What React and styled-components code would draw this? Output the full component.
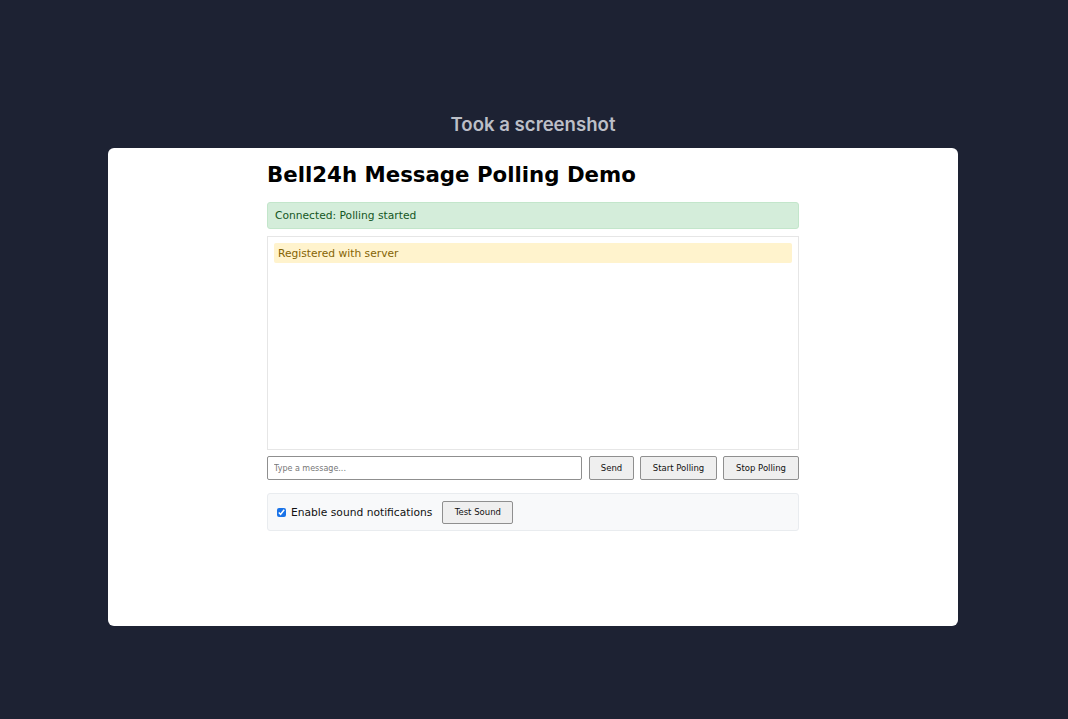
import React, { useState } from 'react';
import styled, { createGlobalStyle } from 'styled-components';

const GlobalStyle = createGlobalStyle`
  html, body {
    margin: 0;
    padding: 0;
    background: #1d2233;
  }
  body {
    font-family: "DejaVu Sans", "Liberation Sans", sans-serif;
  }
`;

const Page = styled.div`
  min-height: 719px;
  display: flex;
  flex-direction: column;
  align-items: center;
  padding: 111px 2px 0 0;
  box-sizing: border-box;
`;

const Caption = styled.div`
  font-family: Inter, "Noto Sans", sans-serif;
  font-weight: 600;
  font-size: 18.6px;
  line-height: 26px;
  color: #bcbfc7;
  margin-bottom: 11px;
`;

const Card = styled.div`
  width: 850px;
  height: 478px;
  background: #fff;
  border-radius: 6px;
  box-sizing: border-box;
  padding-top: 13px;
`;

const Content = styled.div`
  width: 532px;
  margin: 0 auto;
`;

const Heading = styled.h1`
  margin: 0 0 13px;
  font-size: 21.3px;
  line-height: 28px;
  font-weight: bold;
  color: #000;
`;

const Status = styled.div`
  height: 27px;
  box-sizing: border-box;
  padding: 0 7px;
  display: flex;
  align-items: center;
  font-size: 10.7px;
  color: #155724;
  background: #d4edda;
  border: 1px solid #c3e6cb;
  border-radius: 3px;
`;

const Messages = styled.div`
  margin-top: 7px;
  height: 214px;
  box-sizing: border-box;
  border: 1px solid #e6e6e6;
  padding: 6px;
`;

const Message = styled.div`
  height: 20px;
  display: flex;
  align-items: center;
  padding: 0 4px;
  font-size: 10.7px;
  color: #856404;
  background: #fff3cd;
  border-radius: 2px;
`;

const InputRow = styled.div`
  margin-top: 6px;
  display: flex;
  gap: 6px;
  height: 24px;
`;

const TextInput = styled.input`
  flex: 1;
  min-width: 0;
  box-sizing: border-box;
  height: 24px;
  border: 1px solid #8f8f8f;
  border-radius: 2px;
  padding: 0 6px;
  font-family: "DejaVu Sans", sans-serif;
  font-size: 8px;
  margin-right: 1px;
  &::placeholder {
    color: #777;
  }
`;

const Button = styled.button`
  box-sizing: border-box;
  width: ${(p) => p.w}px;
  height: ${(p) => p.h || 24}px;
  padding: 0;
  font-family: "DejaVu Sans", sans-serif;
  font-size: 8.5px;
  color: #111;
  background: #efefef;
  border: 1px solid #8f8f8f;
  border-radius: 2px;
  cursor: pointer;
`;

const SoundPanel = styled.div`
  margin-top: 13px;
  height: 38px;
  box-sizing: border-box;
  display: flex;
  align-items: center;
  padding: 0 9px;
  background: #f8f9fa;
  border: 1px solid #e9ecef;
  border-radius: 3px;
`;

const Check = styled.input`
  width: 9px;
  height: 9px;
  margin: 0 5px 0 0;
  accent-color: #1a73e8;
`;

const Label = styled.label`
  font-size: 10.7px;
  color: #111;
  margin-right: 10px;
  display: flex;
  align-items: center;
`;

export default function App() {
  const [sound, setSound] = useState(true);
  const [text, setText] = useState('');

  return (
    <>
      <GlobalStyle />
      <Page>
        <Caption>Took a screenshot</Caption>
        <Card>
          <Content>
            <Heading>Bell24h Message Polling Demo</Heading>
            <Status>Connected: Polling started</Status>
            <Messages>
              <Message>Registered with server</Message>
            </Messages>
            <InputRow>
              <TextInput
                placeholder="Type a message..."
                value={text}
                onChange={(e) => setText(e.target.value)}
              />
              <Button w={45}>Send</Button>
              <Button w={77}>Start Polling</Button>
              <Button w={76}>Stop Polling</Button>
            </InputRow>
            <SoundPanel>
              <Label>
                <Check type="checkbox" checked={sound} onChange={(e) => setSound(e.target.checked)} />
                Enable sound notifications
              </Label>
              <Button w={71} h={23}>Test Sound</Button>
            </SoundPanel>
          </Content>
        </Card>
      </Page>
    </>
  );
}
